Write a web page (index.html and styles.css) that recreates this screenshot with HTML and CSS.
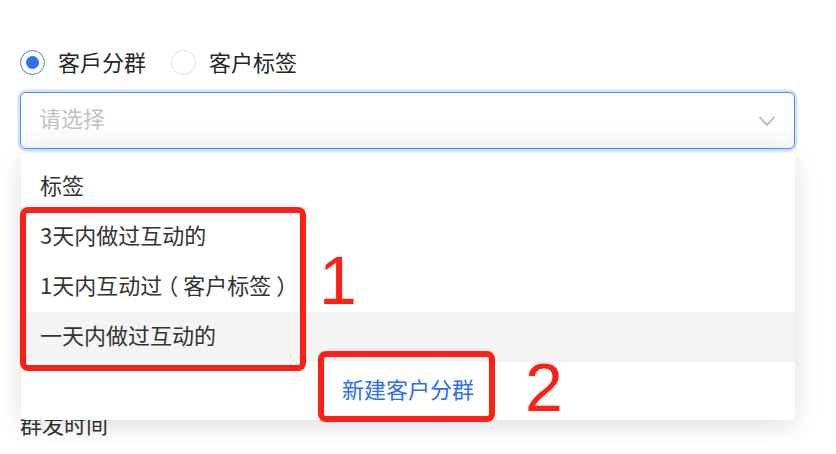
FILE: index.html
```html
<!DOCTYPE html>
<html lang="zh-CN">
<head>
<meta charset="utf-8">
<title>客户分群</title>
<link rel="stylesheet" href="styles.css">
</head>
<body>
<div class="page">
  <div class="radios">
    <label class="radio checked"><span class="radio-ring"><span class="radio-dot"></span></span><span class="radio-label">客戶分群</span></label>
    <label class="radio"><span class="radio-ring"></span><span class="radio-label">客户标签</span></label>
  </div>
  <div class="field">
    <div class="select">
      <span class="placeholder">请选择</span>
      <svg class="chevron" width="18" height="12" viewBox="0 0 18 12"><path d="M1.5 2 L9 10 L16.5 2" fill="none" stroke="#b4b4b4" stroke-width="1.6"/></svg>
    </div>
    <div class="dropdown">
      <ul class="options">
        <li class="option">标签</li>
        <li class="option">3天内做过互动的</li>
        <li class="option">1天内互动过<span class="paren">（</span>客户标签<span class="paren">）</span></li>
        <li class="option hover">一天内做过互动的</li>
      </ul>
      <div class="footer"><a class="create">新建客户分群</a></div>
    </div>
    <div class="mark mark-box1"></div>
    <div class="mark mark-box2"></div>
    <div class="mark-num num1">1</div>
    <div class="mark-num num2">2</div>
  </div>
  <div class="next-label">群发时间</div>
</div>
</body>
</html>
```

FILE: styles.css
```css
* { box-sizing: border-box; }
html, body { margin: 0; padding: 0; background: #fff; }
body {
  font-family: "Noto Sans CJK SC", "Noto Sans", sans-serif;
  color: #333;
  font-size: 22px;
  width: 836px;
  height: 454px;
  overflow: hidden;
}
.page {
  padding: 50px 41px 0 20px;
}
.radios {
  display: flex;
  align-items: center;
  gap: 25px;
  height: 25px;
}
.radio {
  display: flex;
  align-items: center;
  gap: 13px;
}
.radio-ring {
  width: 25px;
  height: 25px;
  border-radius: 50%;
  border: 1px solid #dcdfe6;
  display: flex;
  align-items: center;
  justify-content: center;
  background: #fff;
}
.radio.checked .radio-ring { border: 1.5px solid #3b7ff5; }
.radio-dot {
  width: 13px;
  height: 13px;
  border-radius: 50%;
  background: #2b70f5;
}
.radio-label {
  line-height: 25px;
  padding-bottom: 2px;
  color: #262626;
}
.field {
  position: relative;
  margin-top: 17px;
}
.select {
  height: 57px;
  border: 1.5px solid #4b8df8;
  border-radius: 6px;
  box-shadow: 0 0 0 2.5px #d2e2fc;
  background: linear-gradient(#fff 55%, #f6f6f6);
  display: flex;
  align-items: center;
  justify-content: space-between;
  padding: 0 18px 0 18px;
}
.placeholder { color: #c2c2c2; line-height: 1; padding-bottom: 7px; }
.chevron { display: block; margin-top: 0; }
.dropdown {
  position: absolute;
  left: 1px;
  top: 62px;
  width: 774px;
  background: #fff;
  border-radius: 5px;
  box-shadow: 0 6px 26px rgba(0, 0, 0, 0.13);
  padding-top: 8px;
  z-index: 2;
}
.options { list-style: none; margin: 0; padding: 0; }
.option {
  height: 50px;
  line-height: 45px;
  padding-bottom: 5px;
  padding-left: 19px;
  color: #333;
}
.paren {
  display: inline-block;
  font-feature-settings: "halt" 1;
  padding: 0 5px;
}
.option.hover { background: #f4f4f4; }
.footer {
  height: 58px;
  display: flex;
  align-items: center;
  justify-content: center;
  padding-bottom: 7px;
}
.create { color: #2d6cf6; }
.mark {
  position: absolute;
  border: 6px solid #ff1f14;
  border-radius: 8px;
  z-index: 3;
}
.mark-box1 { left: 0; top: 115px; width: 286px; height: 164px; }
.mark-box2 { left: 298px; top: 259px; width: 177px; height: 71px; }
.mark-num {
  position: absolute;
  font-family: "Liberation Sans", Arial, sans-serif;
  font-size: 68px;
  line-height: 1;
  color: #ff1f14;
  z-index: 3;
}
.num1 { left: 299px; top: 154px; }
.num2 { left: 505px; top: 261px; }
.next-label {
  margin-top: 262px;
  line-height: 24px;
  color: #333;
}
```
